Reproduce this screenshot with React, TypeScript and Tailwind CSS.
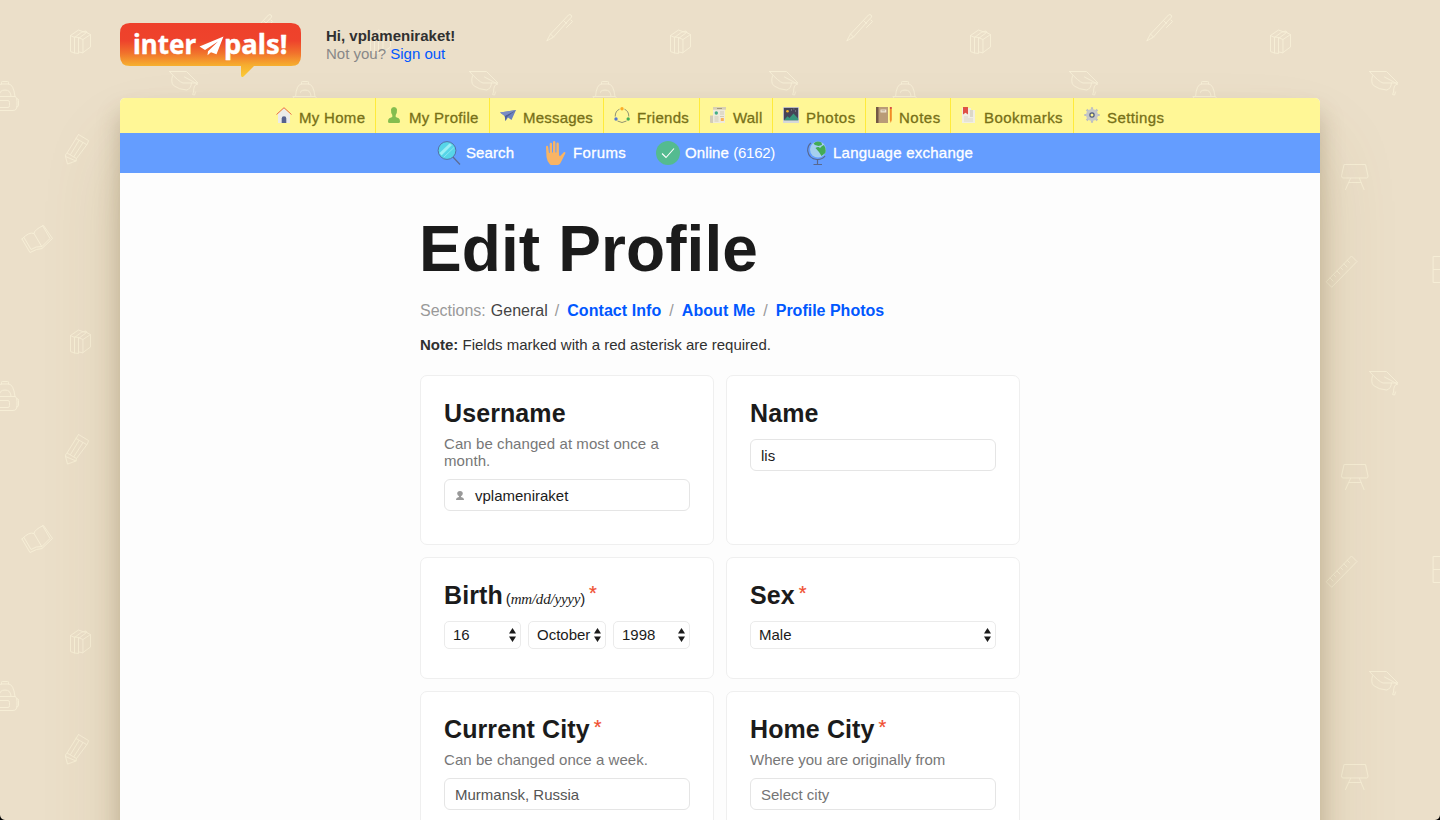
import type { ReactNode } from 'react';

function Doodles() {
  return (
    <svg className="absolute inset-0 h-full w-full" aria-hidden="true">
      <defs>
        <pattern id="doodles" width="300" height="300" patternUnits="userSpaceOnUse">
          <g fill="none" stroke="#f6eed6" strokeWidth="1" strokeLinejoin="round" strokeLinecap="round">
            {/* books */}
            <path d="M70.500 35.500v16l4 1.500v-15.500l-4-2 8-5.500 4 1.500-8 6M74.500 53l4 .5v-16l-4-.5M82.500 31.500l4 1-8 6M78.500 52l4.500.8v-13.300l-4.500-2M83 39.500l7.500-5-4-2M90.500 34.500v12.500l-7.500 5.500M87 32.500l-1-1.500-3.500 1" />
            {/* backpack */}
            <path d="M1.500 84v-1.500q0-1 1-1h5q1 0 1 1V84M-4.500 96.500q1-12.500 6-12.500h7q5 0 6.500 12.500M-1 96.500q0-6.500 6-6.500t6 6.500M-7 96.500h22.500q1.500 1.500 1.500 5v4q0 5-4 5H-3q-4 0-4-5v-4q0-4 1-5M0 100.500h8q1.500 0 1.500 2v3q0 2-1.500 2H0q-1.500 0-1.500-2v-3q0-2 1.500-2M17 98.500q1.500 0 1.500 2v4.500q0 2-2 2M-8 98.500q-1.500 0-1.500 2v4.500q0 2 2 2" />
            <path transform="translate(300 0)" d="M-4.500 96.500q1-12.500 6-12.500M-7 96.500h7M0 110.500h-3q-4 0-4-5v-4q0-4 1-5M-8 98.500q-1.500 0-1.500 2v4.500q0 2 2 2" />
            {/* pencil */}
            <path d="M78.500 134.500l10 6q-.3 2-1.500 4l-10.500 14-9.500-5.500 11.500-18.500M76 138.500l10.500 6M70.500 154.500l8.500-14M74 156.500l9-14M67 153q-2 1.500-1.500 3.500l2 7.500 8.500-3M65.500 156.500l10.500 4.500.5-2.500" />
            {/* open book */}
            <path d="M22 239l8 13.500q7-4 12-4l10.500-10L43.500 225.500q-9 4-9.500 8-5-2-12 5.500M34 233.500l8 13.500M24 237.500l7 12q5-3.500 11-3l8-8-7.500-13" />
            {/* graduation cap */}
            <path d="M169.500 71.500h17l11.500 11.500h-15q-4-1-13.500-11.500M184.500 77l13 7M172.500 76q-2 6 1 9.500 5 4 13 4.500 4.500-1 5-7M197.500 84q-4 0-4 8M193.500 92l-1 2.500 2 .5 1-3" />
            {/* easel */}
            <path d="M144.500 164.500h21l2.500 11.500q0 2-1.500 2h-23.500q-1.500 0-1.500-2zM150.500 178.500l-5 11M159.500 178.500l4.500 11M149 182.500h12" />
            {/* ruler */}
            <path d="M126.500 281.500l25-25.500 5.500 5.500-25 25.500zM130 278l3 3M133.500 274.500l2 2M137 271l3 3M140.500 267.500l2 2M144 264l3 3M147.500 260.500l2 2" />
            {/* cabinet */}
            <path d="M233.500 256.500h16v26h-16zM233.500 269.500h16" />
            {/* pen */}
            <path d="M247 40.500l3.500-6.500L268.500 15q1.500-1 2.500 0t.5 2L253.500 37zM250.500 34l3 3M263.500 20.500l3 3M271 20l1.500 1.500-6 6" />
          </g>
        </pattern>
      </defs>
      <rect width="100%" height="100%" fill="url(#doodles)" />
    </svg>
  );
}

function Logo() {
  return (
    <svg width="182" height="56" viewBox="0 0 182 56" className="block shrink-0">
      <defs>
        <linearGradient id="flame" x1="0" y1="0" x2="0" y2="54" gradientUnits="userSpaceOnUse">
          <stop offset="0" stopColor="#ee402b" />
          <stop offset=".33" stopColor="#ee432c" />
          <stop offset=".55" stopColor="#f1702c" />
          <stop offset=".78" stopColor="#f6ad2f" />
          <stop offset="1" stopColor="#fbcb36" />
        </linearGradient>
      </defs>
      <path d="M10 0h161q10 0 10 10v23q0 10-10 10h-37l-10.500 10.500q-2.500 1.500-2.500-1.500V43H10Q0 43 0 33V10Q0 0 10 0z" fill="url(#flame)" />
      <g fill="#fff" stroke="#fff" strokeWidth=".4" strokeLinejoin="round" fontFamily="'Noto Sans', 'Open Sans', sans-serif" fontWeight="700" fontSize="27.5">
        <text x="13" y="30.500" textLength="63" lengthAdjust="spacingAndGlyphs">inter</text>
        <text x="104" y="30.500" textLength="63.500" lengthAdjust="spacingAndGlyphs">pals!</text>
      </g>
      <path d="M103.500 13.500L79.500 23.500l5.500 3.500 13-8.500-10 9.800-.5 4 3.500-3 5.500 2z" fill="#fff" />
    </svg>
  );
}

const icon = 'block h-4 w-4 shrink-0';

const HomeIcon = () => (
  <svg className={icon} viewBox="0 0 16 16">
    <path d="M2 7l6-5.500L14 7v9H2z" fill="#ecebe9" />
    <path d="M0.500 7.500L8 .7l7.500 6.800" fill="none" stroke="#e8694e" strokeWidth="1" />
    <path d="M5.700 16v-4.500a2.300 2.300 0 014.600 0V16z" fill="#56618d" />
  </svg>
);
const PersonIcon = () => (
  <svg className={icon} viewBox="0 0 16 16">
    <path d="M5 2.500Q5.300 0 8 0t3 2.500q.2 3.500-1.300 5.500v2l3 1.200q1.300.8 1.300 3.300 0 1.500-1.500 1.500h-9Q2 16 2 14.500 2 12 3.300 11.200l3-1.200V8Q4.800 6 5 2.500z" fill="#84bd4f" />
  </svg>
);
const PlaneIcon = () => (
  <svg className={icon} viewBox="0 0 16 16">
    <path d="M0 5.500L16 3l-4.500 10-3.500-2.500-2.500 3.500-.8-5z" fill="#6b80bd" />
    <path d="M16 3L4.700 9l.8 5 1.500-4z" fill="#4d5f96" />
    <path d="M0 5.500L16 3 4.700 9z" fill="#7a8cc4" />
  </svg>
);
const FriendsIcon = () => (
  <svg className={icon} viewBox="0 0 16 16">
    <path d="M5.500 2.200Q1.200 4 1.200 9.500M10.500 2.200q4.300 1.800 4.300 7.300M3.500 14q4.500 3 9 0" fill="none" stroke="#85886c" strokeWidth=".9" />
    <circle cx="8" cy="1.800" r="1.700" fill="#fbac27" />
    <circle cx="2" cy="12" r="1.700" fill="#5478d0" />
    <circle cx="14.200" cy="12" r="1.700" fill="#45ad56" />
  </svg>
);
const WallIcon = () => (
  <svg className={icon} viewBox="0 0 16 16">
    <path d="M0 8.500h4V16H1q-1 0-1-1z" fill="#d2cbb5" />
    <path d="M3 2h12v14H3z" fill="#eeeadb" />
    <path d="M3 0h13v2.700H3z" fill="#d8cfb4" />
    <path d="M7 1h5v.8H7z" fill="#958c70" />
    <circle cx="6.300" cy="6" r="1.700" fill="#44ad87" />
    <path d="M10 5h4M10 7h4M4.500 10h4M4.500 12h4M4.500 14h4M10 9.500h4" stroke="#c4bda8" strokeWidth=".7" />
    <path d="M10.800 11h3v3h-3z" fill="#fbb057" />
  </svg>
);
const PhotosIcon = () => (
  <svg className={icon} viewBox="0 0 16 16">
    <path d="M0 0h16v16H0z" fill="#d7d8d9" />
    <path d="M.8.8h14.400v12.400H.8z" fill="#454457" />
    <path d="M1 13.200l3.500-4 2 1.800L10.500 6.500l4.700 5v1.700z" fill="#37967c" />
    <circle cx="4.500" cy="4.200" r="1.300" fill="#f6b52b" />
    <path d="M8 3h1M12 4h1M10.500 2h.8" stroke="#c1c0c0" strokeWidth=".7" />
  </svg>
);
const NotesIcon = () => (
  <svg className={icon} viewBox="0 0 16 16">
    <path d="M0 0h12v16H0z" fill="#b99b77" />
    <path d="M0 0h2.500v16H0z" fill="#735846" />
    <path d="M4.500 2.500h5.800v3H4.500z" fill="#eee5d4" />
    <path d="M5.500 3.500h3.500v.7H5.500z" fill="#b09b7e" />
    <path d="M13.800 2h2v11l-1 3-1-3z" fill="#f28b26" />
    <path d="M13.800 0h2v2h-2z" fill="#d84f42" />
  </svg>
);
const BookmarksIcon = () => (
  <svg className={icon} viewBox="0 0 16 16">
    <path d="M1 1h9v2h4v13H1z" fill="#f1eee2" />
    <path d="M9 3h3v7H9zM3 11.500h9v1H3zM3 13.500h9v1H3zM3 9.500h4v1H3z" fill="#dcd8c8" />
    <path d="M2 0h5v7.500L4.500 5.800 2 7.500z" fill="#df5146" />
  </svg>
);
const SettingsIcon = () => (
  <svg className={icon} viewBox="0 0 16 16">
    <g stroke="#bdbfc1" strokeWidth="2.200">
      <path d="M8 .3v15.400M.3 8h15.400M2.600 2.600l10.800 10.800M13.400 2.600L2.600 13.400" />
    </g>
    <circle cx="8" cy="8" r="6" fill="#c5c7c8" />
    <circle cx="8" cy="8" r="2.100" fill="#fff794" stroke="#4e5a7c" strokeWidth="1.200" />
  </svg>
);

const mainNav: { label: string; icon: ReactNode; width: string; text: string }[] = [
  { label: 'My Home', icon: <HomeIcon />, width: 'w-[111px] pl-[11px]', text: 'tracking-[0.3px]' },
  { label: 'My Profile', icon: <PersonIcon />, width: 'w-[114px] pl-2.5', text: 'tracking-[0.3px]' },
  { label: 'Messages', icon: <PlaneIcon />, width: 'w-[114px] pl-2.5', text: 'tracking-[0.2px]' },
  { label: 'Friends', icon: <FriendsIcon />, width: 'w-[96px] pl-2.5', text: 'tracking-[0.3px]' },
  { label: 'Wall', icon: <WallIcon />, width: 'w-[73px] pl-2.5', text: 'tracking-[0.2px]' },
  { label: 'Photos', icon: <PhotosIcon />, width: 'w-[93px] pl-2.5', text: 'tracking-[0.5px]' },
  { label: 'Notes', icon: <NotesIcon />, width: 'w-[85px] pl-2.5', text: 'tracking-[0.5px]' },
  { label: 'Bookmarks', icon: <BookmarksIcon />, width: 'w-[123px] pl-2.5', text: 'tracking-[0.45px]' },
  { label: 'Settings', icon: <SettingsIcon />, width: 'w-[101px] pl-2.5', text: 'tracking-[0.4px]' },
];

const SearchIcon = () => (
  <svg width="26" height="26" viewBox="0 0 26 26" className="block">
    <path d="M17 16l7 7.500" stroke="#5c6b93" strokeWidth="1.200" />
    <circle cx="11" cy="9.500" r="8.900" fill="#57d5e8" stroke="#536a9e" strokeWidth=".9" />
    <path d="M3.500 12L13.500 2.500l2.500 1.500L5.500 14.500z" fill="#9beff5" />
    <path d="M8 16L18 6.500" stroke="#8ae7f0" strokeWidth="1" />
  </svg>
);
const HandIcon = () => (
  <svg width="24" height="26" viewBox="0 0 24 26" className="block">
    <path d="M6 23.500Q3 20.500 2.500 16L2 6q0-1.200 1-1.200T4.200 6L5 12h.7V3q0-1.200 1.200-1.200T8 3v8.500h1V1.300Q9 0 10.200 0t1.200 1.300v10.200h1V2.800q0-1.300 1.200-1.300t1.200 1.300L15 14.300l1 1 3.800-4q1.500-.8 1.700.7l-4.500 9q-1 3-3 3H8.500Q7 24 6 23.500z" fill="#f8b464" />
  </svg>
);
const CheckIcon = () => (
  <svg width="24" height="24" viewBox="0 0 24 24" className="block">
    <circle cx="12" cy="12" r="12" fill="#54bb90" />
    <path d="M6 12.500l4 4 8-9" fill="none" stroke="#fff" strokeWidth="1.100" />
  </svg>
);
const GlobeIcon = () => (
  <svg width="22" height="26" viewBox="0 0 22 26" className="block">
    <path d="M5 2Q1.500 4.500 1.700 10q1.300 8 9.300 8.500 5 .3 8-3.500M11.500 18.500v5M7.500 23.500h8.500" fill="none" stroke="#58688f" strokeWidth="1.200" />
    <circle cx="12" cy="8.500" r="8" fill="#a5cfef" />
    <path d="M7.500 2.500Q11-1 15.500 1.500L16 4l-3.500 1L9 4zM9.500 7q3-2 4.500 0l2-2 2-1q2.500 4 1.300 8l-3.800 3-2.500-4z" fill="#43ab56" />
  </svg>
);

const medium = '[-webkit-text-stroke:0.3px_currentColor]';

function Select({ value, width }: { value: string; width: string }) {
  return (
    <button className={`${width} flex h-7 items-center rounded-[5px] border border-[#ebebeb] bg-white pl-2 pr-1 text-left text-[15px] leading-[18px] text-[#1b1b1b]`}>
      <span className="min-w-0 flex-1 overflow-hidden whitespace-nowrap">{value}</span>
      <svg width="7" height="14" viewBox="0 0 7 14" className="ml-[3px] block shrink-0">
        <path d="M0 5.500L3.500 0 7 5.500zM0 8.500h7L3.500 14z" fill="#1b1b1b" />
      </svg>
    </button>
  );
}

function Field({ children, placeholder }: { children?: ReactNode; placeholder?: boolean }) {
  return (
    <div className={`flex h-8 items-center rounded-[6px] border border-[#e5e5e5] bg-white px-2.5 pt-0.5 text-[15px] leading-[18px] ${placeholder ? 'text-[#757575]' : 'text-[#1b1b1b]'}`}>
      {children}
    </div>
  );
}

function Card({ title, extra, required, gap, hint, hintText, height, children }: {
  title: string;
  extra?: ReactNode;
  required?: boolean;
  gap?: string;
  hint?: string;
  hintText?: string;
  height: string;
  children: ReactNode;
}) {
  return (
    <section className={`${height} rounded-[7px] border border-[#efefef] bg-white px-[23px] pt-[23px]`}>
      <h2 className="flex h-7 items-start whitespace-nowrap text-[25px] font-bold leading-7 tracking-[0.1px] text-[#1b1b1b]">
        <span>
          {title}
          {extra}
        </span>
        {required && <span className={`${gap} mt-px text-[20px] font-normal leading-[22px] text-[#f04e30] [-webkit-text-stroke:0.2px_currentColor]`}>*</span>}
      </h2>
      {hint ? <p className={`${hintText} mb-2.5 mt-2 text-[15px] leading-[17px] text-[#777]`}>{hint}</p> : <div className="h-3" />}
      {children}
    </section>
  );
}

export default function App() {
  return (
    <div className="relative h-[820px] overflow-hidden bg-[#ebdfc9] font-['Liberation_Sans',Arial,sans-serif]">
      <Doodles />
      <div className="relative mx-auto w-[1200px]">
        <header className="flex h-[98px] items-start pt-[23px]">
          <Logo />
          <div className="ml-6 mt-1 text-[15px] leading-[18px]">
            <p className="font-bold text-[#303030]">Hi, vplameniraket!</p>
            <p className="text-[#888]">
              Not you? <a className="text-[#0057ff]">Sign out</a>
            </p>
          </div>
        </header>

        <div className="h-[1000px] rounded-t-[5px] bg-[#fdfdfd] shadow-[0_50px_80px_rgba(130,105,45,0.16),0_16px_24px_rgba(90,70,30,0.28)]">
          <nav className="flex h-[35px] rounded-t-[5px] bg-[#fff796] pl-[145px]">
            {mainNav.map((item, i) => (
              <a key={item.label} className={`${item.width} flex shrink-0 gap-[7px] border-[#ffeb3b] pt-[9px] ${i < mainNav.length - 1 ? 'border-r' : ''}`}>
                {item.icon}
                <span className={`${item.text} ${medium} mt-0.5 whitespace-nowrap text-[15px] leading-[18px] text-[#777018]`}>{item.label}</span>
              </a>
            ))}
          </nav>
          <nav className={`${medium} flex h-10 items-start bg-[#649dff] pl-[316px] pt-2 text-[15px] leading-6 text-white`}>
            <a className="flex w-[108px] gap-1">
              <SearchIcon />
              <span className="tracking-[0.1px]">Search</span>
            </a>
            <a className="flex w-[112px] gap-[5px]">
              <HandIcon />
              <span className="tracking-[0.4px]">Forums</span>
            </a>
            <a className="flex w-[150px] gap-[5px]">
              <CheckIcon />
              <span>
                <span className="tracking-[0.1px]">Online </span>
                <span className="tracking-[-0.25px] [-webkit-text-stroke:0]">(6162)</span>
              </span>
            </a>
            <a className="flex gap-[5px]">
              <GlobeIcon />
              <span className="tracking-[0.25px]">Language exchange</span>
            </a>
          </nav>

          <main className="mx-auto w-[600px] pt-11">
            <h1 className="-ml-px text-[64px] font-bold leading-[64px] tracking-[0.1px] text-[#1b1b1b]">Edit Profile</h1>
            <div className="mt-5 flex text-base leading-5 text-[#999]">
              <span className="mr-[5px]">Sections:</span>
              <span className="text-[#444]">General</span>
              <span className="ml-[7px] mr-2">/</span>
              <a className="font-bold tracking-[0.07px] text-[#0057ff]">Contact Info</a>
              <span className="mx-2">/</span>
              <a className="font-bold tracking-[0.07px] text-[#0057ff]">About Me</a>
              <span className="mx-2">/</span>
              <a className="font-bold text-[#0057ff]">Profile Photos</a>
            </div>
            <p className="mt-[15px] text-[15px] leading-[18px] text-[#303030]">
              <b>Note:</b> Fields marked with a red asterisk are required.
            </p>

            <div className="mt-[21px] grid grid-cols-2 gap-3">
              <Card title="Username" hint="Can be changed at most once a month." hintText="tracking-[0.08px]" height="h-[170px]">
                <Field>
                  <svg width="8" height="9" viewBox="0 0 8 9" className="mb-0.5 ml-px mr-[11px] block">
                    <path d="M1.200 2.700Q1.200 0 4 0t2.800 2.700Q6.500 4.500 5 5.200v.8q3 .5 3 3H0q0-2.500 3-3v-.8Q1.500 4.500 1.200 2.700z" fill="#999" />
                  </svg>
                  vplameniraket
                </Field>
              </Card>
              <Card title="Name" height="h-[170px]">
                <Field>lis</Field>
              </Card>
              <Card
                title="Birth"
                required
                gap="ml-1"
                height="h-[122px]"
                extra={
                  <span className="ml-[3px] text-[15px] font-normal tracking-[-0.2px]">
                    (<i className="font-['Liberation_Serif',serif]">mm/dd/yyyy</i>)
                  </span>
                }
              >
                <div className="flex gap-[7px]">
                  <Select value="16" width="w-[77px]" />
                  <Select value="October" width="w-[78px]" />
                  <Select value="1998" width="w-[77px]" />
                </div>
              </Card>
              <Card title="Sex" required gap="ml-1" height="h-[122px]">
                <Select value="Male" width="w-full" />
              </Card>
              <Card title="Current City" required gap="ml-1" hint="Can be changed once a week." hintText="tracking-[0.05px]" height="h-[170px]">
                <Field>
                  <span className="text-[#555]">Murmansk, Russia</span>
                </Field>
              </Card>
              <Card title="Home City" required gap="ml-1" hint="Where you are originally from" hintText="tracking-[-0.02px]" height="h-[170px]">
                <Field placeholder>Select city</Field>
              </Card>
            </div>
          </main>
        </div>
      </div>
      <svg width="5" height="5" viewBox="0 0 5 5" className="absolute bottom-0 left-0">
        <path d="M0 0q.5 4.500 5 5H0z" />
      </svg>
      <svg width="5" height="5" viewBox="0 0 5 5" className="absolute bottom-0 right-0">
        <path d="M5 0q-.5 4.500-5 5h5z" />
      </svg>
    </div>
  );
}
